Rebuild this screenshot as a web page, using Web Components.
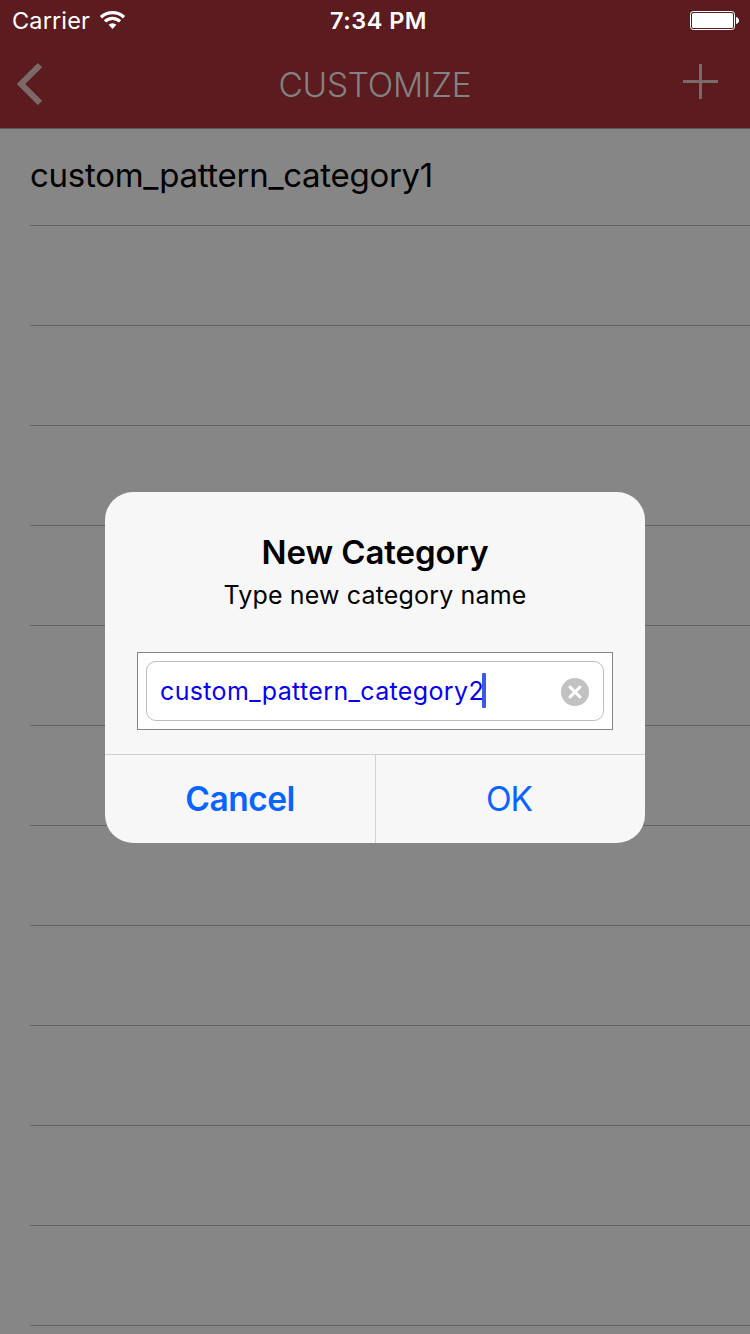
<!DOCTYPE html>
<html lang="en">
<head>
<meta charset="utf-8">
<title>Customize</title>
<style>
html,body{margin:0;height:100%;overflow:hidden}
body{font-family:Inter,"Liberation Sans",sans-serif;background:#868686}
</style>
</head>
<body>
<app-screen>
  <status-bar slot="top"></status-bar>
  <nav-bar slot="top"><fit-text width="193">CUSTOMIZE</fit-text></nav-bar>
  <category-list><fit-text width="403">custom_pattern_category1</fit-text></category-list>
  <alert-dialog slot="overlay">
    <fit-text slot="title" width="227">New Category</fit-text>
    <fit-text slot="message" width="303">Type new category name</fit-text>
    <name-field slot="field"><fit-text width="324">custom_pattern_category2</fit-text></name-field>
    <alert-button slot="actions" primary><fit-text width="109.5">Cancel</fit-text></alert-button>
    <alert-button slot="actions"><fit-text width="46">OK</fit-text></alert-button>
  </alert-dialog>
</app-screen>
<script>
const define = (name, html, init) => customElements.define(name, class extends HTMLElement {
  constructor() {
    super();
    this.attachShadow({mode: 'open'}).innerHTML = html;
  }
  connectedCallback() { if (init) init(this); }
});

define('app-screen', `<style>
:host{display:grid;width:750px;height:1334px;overflow:hidden;background:#868686}
.page,.overlay{grid-area:1/1;min-width:0}
.page{display:flex;flex-direction:column}
.overlay{display:grid;justify-content:center;align-content:start;padding-top:492px}
</style><div class="page"><slot name="top"></slot><slot></slot></div><div class="overlay"><slot name="overlay"></slot></div>`);

define('status-bar', `<style>
:host{display:grid;grid-template-columns:1fr auto 1fr;align-items:start;height:40px;box-sizing:border-box;padding:0 11px 0 12px;background:#5c1b1f;color:#fff;font-size:23.5px;line-height:40px}
.left{display:flex;align-items:start;gap:10px}
.right{display:flex;justify-content:flex-end;padding-top:11px}
.left fit-text,.time{padding-top:1px}
.left svg{margin-top:10px}
.time{font-weight:600;padding-left:6px}
svg{display:block}
</style>
<div class="left"><fit-text width="78">Carrier</fit-text>
<svg width="26" height="20" viewBox="0 0 26 20"><g fill="none" stroke="#fff" stroke-width="3.3"><path d="M1 7.2a16.6 16.6 0 0 1 23 0"/><path d="M5 11.4a10.7 10.7 0 0 1 15 0"/></g><path d="M8.6 14.8a5.6 5.6 0 0 1 7.8 0L12.5 19Z" fill="#fff"/></svg></div>
<div class="time"><fit-text width="97">7:34 PM</fit-text></div>
<div class="right"><svg width="49" height="19" viewBox="0 0 49 19"><rect x=".5" y=".5" width="44" height="18" rx="2.8" fill="none" stroke="#fff"/><rect x="2" y="2" width="41" height="15" rx="1.5" fill="#fff"/><path d="M46 6q3 1 3 3.5T46 13Z" fill="#fff"/></svg></div>`);

define('nav-bar', `<style>
:host{display:grid;grid-template-columns:1fr auto 1fr;height:89px;box-sizing:border-box;border-bottom:1px solid #5b5959;background:#5c1b1f;color:#848282;font-size:33.5px;line-height:90px;padding:0 32px 0 17px}
.title{font-weight:350;margin-left:15px;height:88px}
.back{margin-top:23px}
.add{margin-top:24px;justify-self:end}
svg{display:block}
</style>
<svg class="back" width="26" height="42" viewBox="0 0 26 42" fill="none" stroke="#7b6a6a" stroke-width="6"><path d="M23 2.1 4.1 21 23 39.9"/></svg>
<div class="title"><slot></slot></div>
<svg class="add" width="35" height="35" viewBox="0 0 35 35"><path d="M16 0h3v16h16v3H19v16h-3V19H0v-3h16Z" fill="#7b6a6a"/></svg>`);

define('category-list', `<style>
:host{display:block;padding-left:30px;font-size:33px;color:#000}
.row{height:100px;box-sizing:border-box;border-bottom:1px solid #636365}
.row:first-of-type{height:97px;line-height:93px}
</style><div class="row"><slot></slot></div>` + '<div class="row"></div>'.repeat(11));

define('alert-dialog', `<style>
:host{display:flex;flex-direction:column;width:540px;height:351px;border-radius:28px;overflow:hidden;background:#f7f7f7;color:#000;text-align:center}
.title{font-size:33px;font-weight:600;line-height:40px;margin-top:40px}
.message{font-size:25px;line-height:32px;margin-top:7px}
.field{margin:41px 32px 24px}
.actions{display:grid;grid-template-columns:1fr 1fr;flex:1;border-top:1px solid #d1d1d4}
</style><div class="title"><slot name="title"></slot></div><div class="message"><slot name="message"></slot></div>
<div class="field"><slot name="field"></slot></div><div class="actions"><slot name="actions"></slot></div>`);

define('name-field', `<style>
:host{display:block;box-sizing:border-box;height:78px;padding:8px;border:1px solid #858585;background:#fff}
.input{display:flex;align-items:center;height:60px;box-sizing:border-box;border:1px solid #bdbdbd;border-radius:10px;padding:0 14px 0 13px;color:#0a00f0;font-size:25px;line-height:58px}
i{width:4px;height:35px;border-radius:1px;background:#3c58ec;margin:-1px 0 0 -2px}
svg{margin:2px 0 0 auto}
</style><div class="input"><slot></slot><i></i>
<svg width="28" height="28" viewBox="0 0 28 28"><circle cx="14" cy="14" r="14" fill="#c2c2c2"/><path d="m9 9 10 10M19 9 9 19" stroke="#fff" stroke-width="3" stroke-linecap="round"/></svg></div>`);

define('alert-button', `<style>
:host{display:block;font-size:33.5px;line-height:89px;color:#0a64ff}
:host([primary]){font-weight:600}
:host(:not([primary])){border-left:1px solid #d1d1d4;padding-right:3px}
</style><slot></slot>`);

// Spreads its text with even letter spacing over the requested width.
define('fit-text', `<style>
:host{display:inline-block;white-space:nowrap}
</style><slot></slot>`, el => {
  const natural = el.getBoundingClientRect().width;
  const count = el.textContent.length;
  el.style.letterSpacing = (Number(el.getAttribute('width')) - natural) / count + 'px';
});
</script>
</body>
</html>
